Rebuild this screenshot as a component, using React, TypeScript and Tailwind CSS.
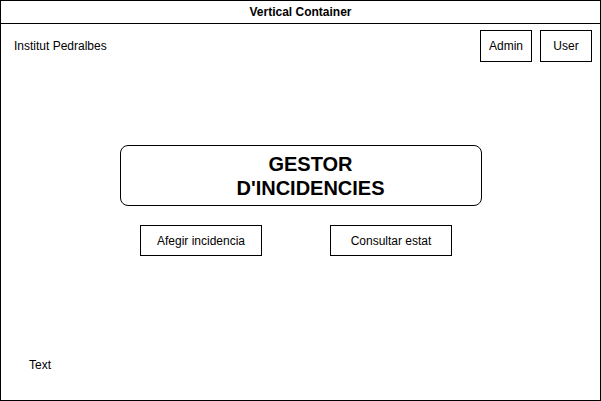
export default function App() {
  return (
    <div className="w-[601px] h-[401px] bg-white font-['Liberation_Sans',Arial,sans-serif] text-[12px] text-black">
      <div className="w-full h-full border border-black flex flex-col">
        <div className="h-[23px] border-b border-black flex items-center justify-center font-bold leading-none">
          Vertical Container
        </div>

        <div className="flex-1 flex flex-col">
          <div className="mt-[6px] flex items-center justify-between pl-[13px] pr-[8px]">
            <span>Institut Pedralbes</span>
            <div className="flex gap-[8px]">
              <div className="w-[52px] h-[32px] border border-black flex items-center justify-center">Admin</div>
              <div className="w-[52px] h-[32px] border border-black flex items-center justify-center">User</div>
            </div>
          </div>

          <div className="mt-[83px] mx-auto w-[362px] h-[61px] pl-[20px] border border-black rounded-[8px] flex flex-col items-center justify-center font-bold text-[20px] leading-[24px]">
            <span>GESTOR</span>
            <span>D'INCIDENCIES</span>
          </div>

          <div className="mt-[19px] flex pl-[139px] gap-[68px]">
            <div className="w-[122px] h-[31px] border border-black flex items-center justify-center">Afegir incidencia</div>
            <div className="w-[122px] h-[31px] border border-black flex items-center justify-center">Consultar estat</div>
          </div>

          <div className="mt-[100px] pl-[28px]">
            <span>Text</span>
          </div>
        </div>
      </div>
    </div>
  )
}
